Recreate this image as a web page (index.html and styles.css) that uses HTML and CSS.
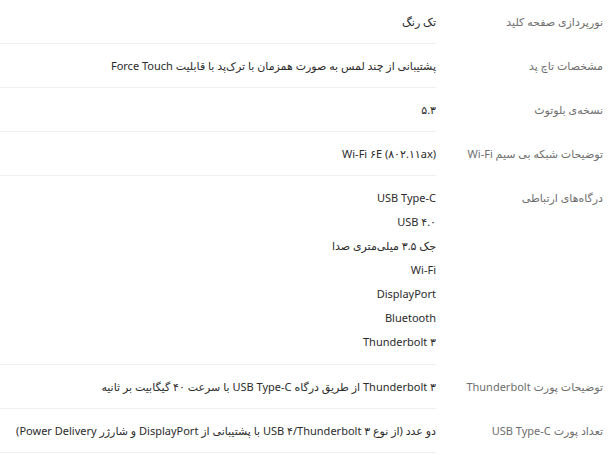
FILE: index.html
```html
<!DOCTYPE html>
<html lang="fa" dir="rtl">
<head>
    <meta charset="UTF-8">
    <meta name="viewport" content="width=device-width, initial-scale=1.0">
    <title>مشخصات فنی</title>
    <link rel="stylesheet" href="styles.css">
</head>
<body>

    <div class="specs">
        <div class="spec-row">
            <div class="spec-label">نورپردازی صفحه کلید</div>
            <div class="spec-value">تک رنگ</div>
        </div>
        <div class="spec-row">
            <div class="spec-label">مشخصات تاچ پد</div>
            <div class="spec-value">پشتیبانی از چند لمس به صورت همزمان با ترک‌پد با قابلیت Force Touch</div>
        </div>
        <div class="spec-row">
            <div class="spec-label">نسخه‌ی بلوتوث</div>
            <div class="spec-value">۵.۳</div>
        </div>
        <div class="spec-row">
            <div class="spec-label">توضیحات شبکه بی سیم Wi-Fi</div>
            <div class="spec-value">Wi-Fi ۶E (۸۰۲.۱۱ax)</div>
        </div>
        <div class="spec-row">
            <div class="spec-label">درگاه‌های ارتباطی</div>
            <div class="spec-value">
                <ul class="spec-list">
                    <li>USB Type-C</li>
                    <li>USB ۴.۰</li>
                    <li>جک ۳.۵ میلی‌متری صدا</li>
                    <li>Wi-Fi</li>
                    <li>DisplayPort</li>
                    <li>Bluetooth</li>
                    <li>Thunderbolt ۳</li>
                </ul>
            </div>
        </div>
        <div class="spec-row">
            <div class="spec-label">توضیحات پورت Thunderbolt</div>
            <div class="spec-value">Thunderbolt ۳ از طریق درگاه USB Type-C با سرعت ۴۰ گیگابیت بر ثانیه</div>
        </div>
        <div class="spec-row">
            <div class="spec-label">تعداد پورت USB Type-C</div>
            <div class="spec-value">دو عدد (از نوع USB ۴/Thunderbolt ۳ با پشتیبانی از DisplayPort و شارژر Power Delivery)</div>
        </div>
    </div>

</body>
</html>
```

FILE: styles.css
```css
body {
    margin: 0;
    padding: 0;
    background-color: #fff;
    color: #2b2b2b;
    font-family: 'Noto Sans', 'DejaVu Sans', sans-serif;
    font-size: 11px;
}

.specs {
    padding-right: 13px;
}

.spec-row {
    display: flex;
}

.spec-label {
    flex: 0 0 167px;
    padding: 10px 0;
    line-height: 23px;
    color: #6e6e6e;
}

.spec-value {
    flex: 1;
    padding: 10px 0;
    line-height: 23px;
    border-bottom: 1px solid #efefef;
}

.spec-list {
    list-style: none;
    margin: 0;
    padding: 0;
}

.spec-list li {
    line-height: 24px;
}
```
